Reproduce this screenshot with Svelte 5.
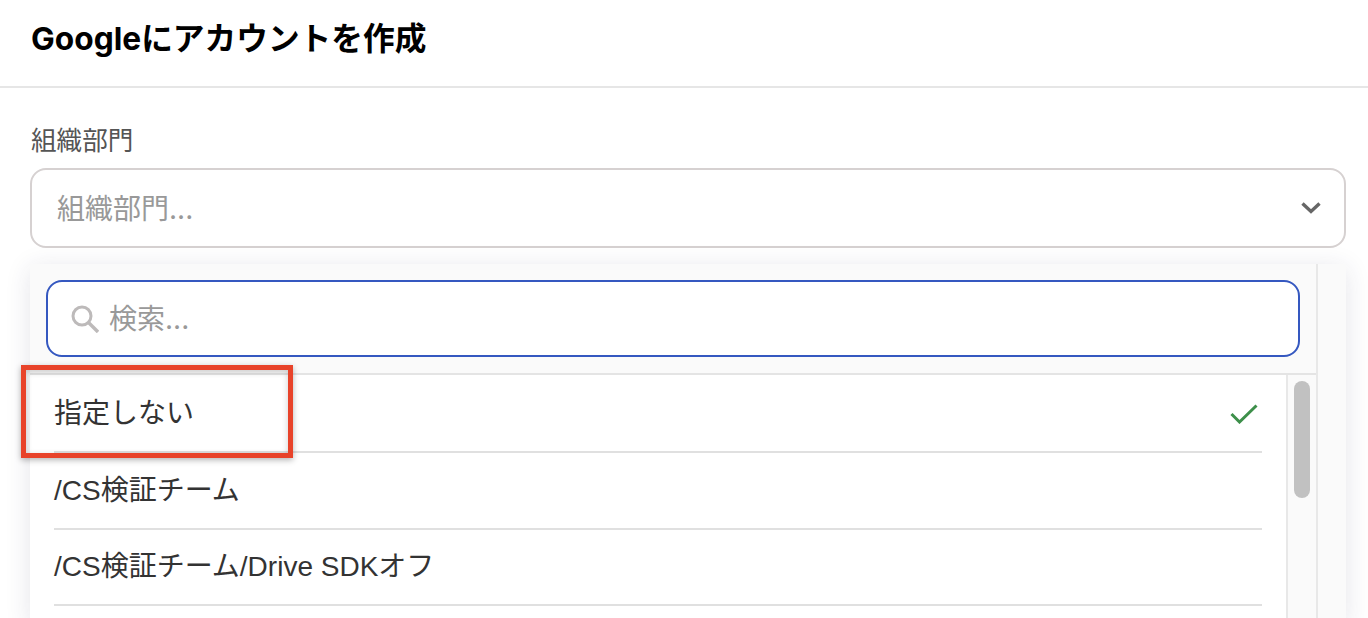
<script>
  const options = [
    { label: '指定しない', selected: true },
    { label: '/CS検証チーム' },
    { label: '/CS検証チーム/Drive SDKオフ' }
  ];
</script>

<div class="page">
  <header class="header">
    <h1>Googleにアカウントを作成</h1>
  </header>

  <div class="body">
    <div class="label">組織部門</div>
    <div class="select">
      <span class="placeholder">組織部門...</span>
      <svg class="chevron" width="20" height="12" viewBox="0 0 20 12" fill="none">
        <path d="M1.5 1.5L10 9.5L18.5 1.5" stroke="#666" stroke-width="3.4" />
      </svg>
    </div>

    <div class="panel">
      <div class="menu">
        <div class="search-wrap">
          <div class="search">
            <svg width="28" height="28" viewBox="0 0 28 28" fill="none">
              <circle cx="11" cy="11" r="9" stroke="#bdbaba" stroke-width="3" />
              <path d="M17.5 17.5L27 27" stroke="#bdbaba" stroke-width="3.4" />
            </svg>
            <span class="search-text">検索...</span>
          </div>
        </div>

        <div class="list-wrap">
          <div class="list">
            {#each options as option}
              <div class="option">
                <span class="option-label">{option.label}</span>
                {#if option.selected}
                  <svg width="28" height="20" viewBox="0 0 28 20" fill="none">
                    <path d="M1.5 10L9.5 18L26.5 1.5" stroke="#3d8f4a" stroke-width="3" />
                  </svg>
                {/if}
              </div>
            {/each}
          </div>
          <div class="scrollbar">
            <div class="thumb"></div>
          </div>
        </div>
      </div>
      <div class="gutter"></div>

      <div class="annotation"></div>
    </div>
  </div>
</div>

<style>
  :global(body) {
    margin: 0;
    background: #fff;
  }

  .page {
    height: 618px;
    overflow: hidden;
    font-family: Inter, "Noto Sans CJK JP", sans-serif;
    color: #333;
  }

  .header {
    height: 86px;
    padding-left: 31px;
    display: flex;
    align-items: center;
    border-bottom: 2px solid #e6e6e6;
    box-sizing: content-box;
  }

  h1 {
    margin: 0 0 9px 0;
    font-size: 31.7px;
    font-weight: 700;
    color: #000;
    line-height: 40px;
  }

  .body {
    padding: 0 22px 0 30px;
  }

  .label {
    margin-top: 35px;
    padding-left: 1px;
    font-size: 25.6px;
    line-height: 36px;
    color: #555;
  }

  .select {
    height: 76px;
    margin-top: 9px;
    padding: 0 23px 0 25px;
    display: flex;
    align-items: center;
    justify-content: space-between;
    border: 2px solid #d6d1d1;
    border-radius: 16px;
    background: #fff;
  }

  .placeholder {
    margin-bottom: 3px;
    font-size: 28px;
    color: #999;
  }

  .chevron {
    margin-top: 0;
  }

  .panel {
    position: relative;
    margin-top: 16px;
    display: flex;
    background: #fafafa;
    box-shadow: 0 4px 24px rgba(40, 40, 80, 0.12);
    min-height: 360px;
  }

  .menu {
    width: 1286px;
    display: flex;
    flex-direction: column;
    border-right: 2px solid #e8e8e8;
    box-sizing: content-box;
  }

  .gutter {
    flex: 1;
  }

  .search-wrap {
    padding: 16px;
    border-bottom: 2px solid #e4e4e4;
  }

  .search {
    height: 73px;
    padding-left: 23px;
    display: flex;
    align-items: center;
    gap: 10px;
    border: 2px solid #3558c0;
    border-radius: 16px;
    background: #fff;
  }

  .search-text {
    margin-bottom: 3px;
    font-size: 28px;
    color: #999;
  }

  .list-wrap {
    flex: 1;
    display: flex;
  }

  .list {
    width: 1256px;
    padding: 1.5px 24px 0 24px;
    box-sizing: border-box;
    background: #fff;
  }

  .option {
    height: 76.5px;
    padding-right: 4px;
    display: flex;
    align-items: center;
    justify-content: space-between;
    border-bottom: 2px solid #e0e0e0;
    box-sizing: border-box;
    color: #333;
  }

  .option-label {
    margin-bottom: 5px;
    font-family: "Liberation Sans", "Noto Sans CJK JP", sans-serif;
    font-size: 28px;
  }

  .scrollbar {
    flex: 1;
    padding: 6px;
    border-left: 2px solid #e8e8e8;
    background: #fafafa;
  }

  .thumb {
    height: 117px;
    border-radius: 8px;
    background: #c1c1c1;
  }

  /* red highlight drawn over the first option */
  .annotation {
    position: absolute;
    left: -9px;
    top: 101px;
    width: 262px;
    height: 83px;
    border: 5px solid #e8432a;
    box-shadow: 0 2px 6px rgba(0, 0, 0, 0.3), inset 0 2px 6px rgba(0, 0, 0, 0.2);
    pointer-events: none;
  }
</style>
